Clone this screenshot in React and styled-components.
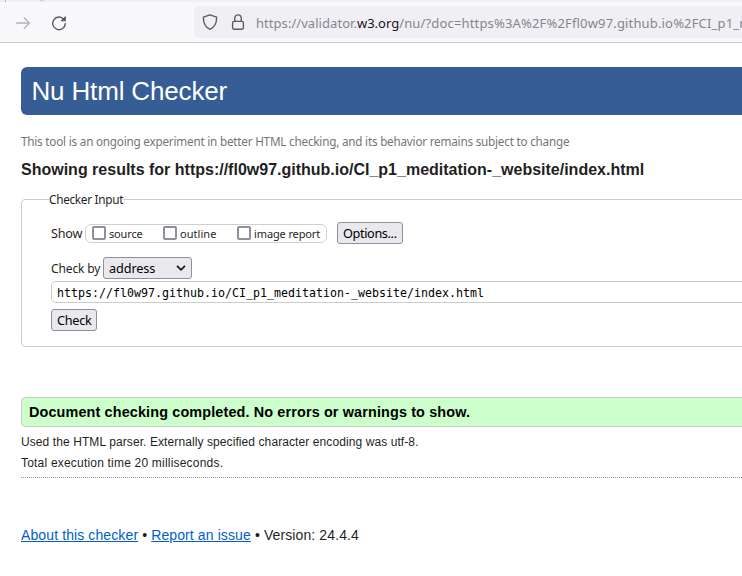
import React from 'react';
import styled, { createGlobalStyle } from 'styled-components';

const sans = '"Liberation Sans", Arial, sans-serif';
const ui = '"Noto Sans", "Segoe UI", sans-serif';
const mono = '"DejaVu Sans Mono", Consolas, monospace';

const GlobalStyle = createGlobalStyle`
  * { box-sizing: border-box; }
  html, body { margin: 0; height: 100%; overflow: hidden; background: #fff; }
  body { font-family: ${sans}; color: #1f1f1f; white-space: nowrap; }
`;

const Text = styled.span`
  font-size: ${(p) => p.$size || 12}px;
  letter-spacing: ${(p) => p.$track || 0}px;
`;

/* Browser chrome */
const TabStrip = styled.div`
  display: flex;
  gap: 34px;
  height: 2px;
  padding-left: 5px;
  background: #f0f0f2;
`;
const TabEdge = styled.div`
  width: 1px;
  height: 2px;
  background: #b4b4ba;
`;
const TabIcon = styled.div`
  width: 4px;
  height: 1px;
  background: #cfcfd4;
`;
const Toolbar = styled.div`
  display: flex;
  align-items: center;
  height: 41px;
  padding: 1px 0 0 15px;
  background: #f9f9fb;
  border-bottom: 1px solid #cccccc;
`;
const NavIcon = styled.svg`
  flex: none;
  width: 16px;
  height: 16px;
  margin-right: ${(p) => p.$gap || 0}px;
  fill: none;
  stroke: ${(p) => p.$color || '#5b5b66'};
  stroke-width: 1.4;
  stroke-linecap: round;
  stroke-linejoin: round;
`;
const UrlBar = styled.div`
  display: flex;
  align-items: center;
  align-self: flex-start;
  flex: 1;
  min-width: 0;
  overflow: hidden;
  height: 32px;
  margin-top: 3px;
  padding-left: 8px;
  border-radius: 4px 0 0 4px;
  background: #f0f0f4;
`;
const Url = styled.div`
  height: 20px;
  margin-top: 2px;
  font-family: ${ui};
  font-size: 13px;
  line-height: 20px;
  color: #85858d;
`;
const Domain = styled(Text)`
  color: #15141a;
`;

/* Page */
const Page = styled.main`
  width: 800px;
  padding: 24px 0 0 21px;
`;
const Banner = styled.h1`
  height: 48px;
  margin: 0;
  padding-left: 10.5px;
  border-radius: 6px;
  background: #365d95;
  color: #fff;
  font-size: 26px;
  font-weight: 400;
  line-height: 48px;
  letter-spacing: -0.16px;
`;
const Tagline = styled.p`
  margin: 18px 0 11px;
  font-family: ${ui};
  font-size: 11.7px;
  line-height: 16px;
  letter-spacing: -0.205px;
  color: #757575;
`;
const Heading = styled.h2`
  margin: 0 0 11px;
  font-size: 16px;
  line-height: 20px;
`;
const Panel = styled.fieldset`
  margin: 0;
  padding: 14px 0 15px 29px;
  border: 1px solid #cccccc;
  border-radius: 4px;
  font-family: ${ui};
`;
const Legend = styled.legend`
  margin-left: -2px;
  padding: 0;
  font-size: 11.8px;
  line-height: 17px;
  letter-spacing: -0.3px;
`;
const Row = styled.div`
  display: flex;
  align-items: center;
  height: 22px;
  margin-bottom: ${(p) => p.$gap || 0}px;
`;
const Label = styled(Text)`
  width: ${(p) => p.$width}px;
`;
const CheckGroup = styled.div`
  display: flex;
  align-items: center;
  width: 242px;
  height: 19px;
  margin: 1px 10px 0 0;
  padding-left: 6px;
  border: 1px solid #cfcfcf;
  border-radius: 6px;
`;
const Option = styled.label`
  display: flex;
  align-items: center;
  width: ${(p) => p.$width}px;
  font-size: 11px;
  letter-spacing: ${(p) => p.$track || 0}px;
`;
const Box = styled.input`
  appearance: none;
  flex: none;
  width: 14px;
  height: 14px;
  margin: -1px 3px 0 0;
  border: 2px solid #8f8f9d;
  border-radius: 2px;
  background: #fff;
`;
const Button = styled.button`
  height: 22px;
  width: ${(p) => p.$width}px;
  padding: 0 0 0 5px;
  border: 1px solid #8f8f9d;
  border-radius: 3px;
  background: #e9e9ed;
  color: #000;
  font-family: ${ui};
  font-size: 12.7px;
  line-height: 20px;
  letter-spacing: ${(p) => p.$track}px;
  text-align: left;
`;
const Select = styled(Button)`
  display: flex;
  justify-content: space-between;
  align-items: center;
  padding-right: 5px;
`;
const Chevron = styled.svg`
  width: 10px;
  height: 6px;
  fill: none;
  stroke: #15141a;
  stroke-width: 1.7;
`;
const AddressField = styled.input`
  display: block;
  width: 760px;
  height: 22px;
  margin: 0 0 6px;
  padding: 1px 0 0 5px;
  border: 1px solid #cccccc;
  border-radius: 5px;
  outline: 0;
  color: #000;
  font-family: ${mono};
  font-size: 11.64px;
`;
const Success = styled.p`
  height: 30px;
  margin: 50px 0 5px;
  padding-left: 7px;
  border: 1px solid #cccccc;
  border-radius: 4px;
  background: #ccffcc;
  color: #000;
  font-size: 14.4px;
  font-weight: 700;
  line-height: 28px;
  letter-spacing: 0.14px;
`;
const Details = styled.div`
  padding-bottom: 3px;
  border-bottom: 1px dotted #999;
`;
const Detail = styled.p`
  margin: 0;
  font-size: 12px;
  line-height: 21px;
  letter-spacing: ${(p) => p.$track}px;
`;
const Footer = styled.footer`
  margin-top: 47px;
  font-size: 14px;
  line-height: 20px;
  letter-spacing: 0.11px;
`;
const Link = styled.a`
  color: #0060c7;
  text-decoration: underline;
`;

const options = [
  { name: 'source', width: 71, track: -0.15 },
  { name: 'outline', width: 74, track: 0.05 },
  { name: 'image report', width: 86, track: -0.12 },
];

export default function App() {
  return (
    <>
      <GlobalStyle />
      <TabStrip>
        <TabEdge />
        <TabIcon />
      </TabStrip>
      <Toolbar>
        <NavIcon viewBox="0 0 16 16" $color="#b5b5ba" $gap={20}>
          <path d="M1.5 8h13M9.3 2.8 14.5 8l-5.2 5.2" />
        </NavIcon>
        <NavIcon viewBox="0 0 16 16" $gap={127}>
          <path d="M12.9 4.4A6.3 6.3 0 1 0 14.3 8.6" />
          <path d="M14.4 2v3.8h-3.8z" fill="#5b5b66" strokeWidth="1" />
        </NavIcon>
        <UrlBar>
          <NavIcon viewBox="0 0 16 16" $gap={12}>
            <path d="M8 .8 14.6 3.2C14.8 8.5 13 13 8 15.3 3 13 1.2 8.5 1.4 3.2z" />
          </NavIcon>
          <NavIcon viewBox="0 0 16 16" $gap={10}>
            <rect x="2.6" y="7.4" width="10.8" height="7.8" rx="1.4" />
            <path d="M4.8 7.4V4.1a3.2 3.2 0 0 1 6.4 0v3.3" />
          </NavIcon>
          <Url>
            <Text $size={13} $track={0.05}>https://validator.</Text>
            <Domain $size={13}>w3.org</Domain>
            <Text $size={13} $track={0.16}>/nu/?doc=https%3A%2F%2Ffl0w97.github.io%2FCI_p1_m</Text>
          </Url>
        </UrlBar>
      </Toolbar>
      <Page>
        <Banner>Nu Html Checker</Banner>
        <Tagline>This tool is an ongoing experiment in better HTML checking, and its behavior remains subject to change</Tagline>
        <Heading>Showing results for https://fl0w97.github.io/CI_p1_meditation-_website/index.html</Heading>
        <Panel>
          <Legend>Checker Input</Legend>
          <Row $gap={13}>
            <Label $size={12.6} $track={-0.2} $width={34}>Show</Label>
            <CheckGroup>
              {options.map((o) => (
                <Option key={o.name} $width={o.width} $track={o.track}>
                  <Box type="checkbox" />
                  {o.name}
                </Option>
              ))}
            </CheckGroup>
            <Button $width={66} $track={-0.37}>Options...</Button>
          </Row>
          <Row $gap={2}>
            <Label $size={12} $track={-0.12} $width={52}>Check by</Label>
            <Select $width={89} $track={-0.1}>
              address
              <Chevron viewBox="0 0 10 6"><path d="M1 .8 5 4.8 9 .8" /></Chevron>
            </Select>
          </Row>
          <AddressField readOnly value="https://fl0w97.github.io/CI_p1_meditation-_website/index.html" />
          <Row>
            <Button $width={46} $track={-0.25}>Check</Button>
          </Row>
        </Panel>
        <Success>Document checking completed. No errors or warnings to show.</Success>
        <Details>
          <Detail $track={0.09}>Used the HTML parser. Externally specified character encoding was utf-8.</Detail>
          <Detail $track={0.2}>Total execution time 20 milliseconds.</Detail>
        </Details>
        <Footer>
          <Link>About this checker</Link> • <Link>Report an issue</Link> • Version: 24.4.4
        </Footer>
      </Page>
    </>
  );
}
